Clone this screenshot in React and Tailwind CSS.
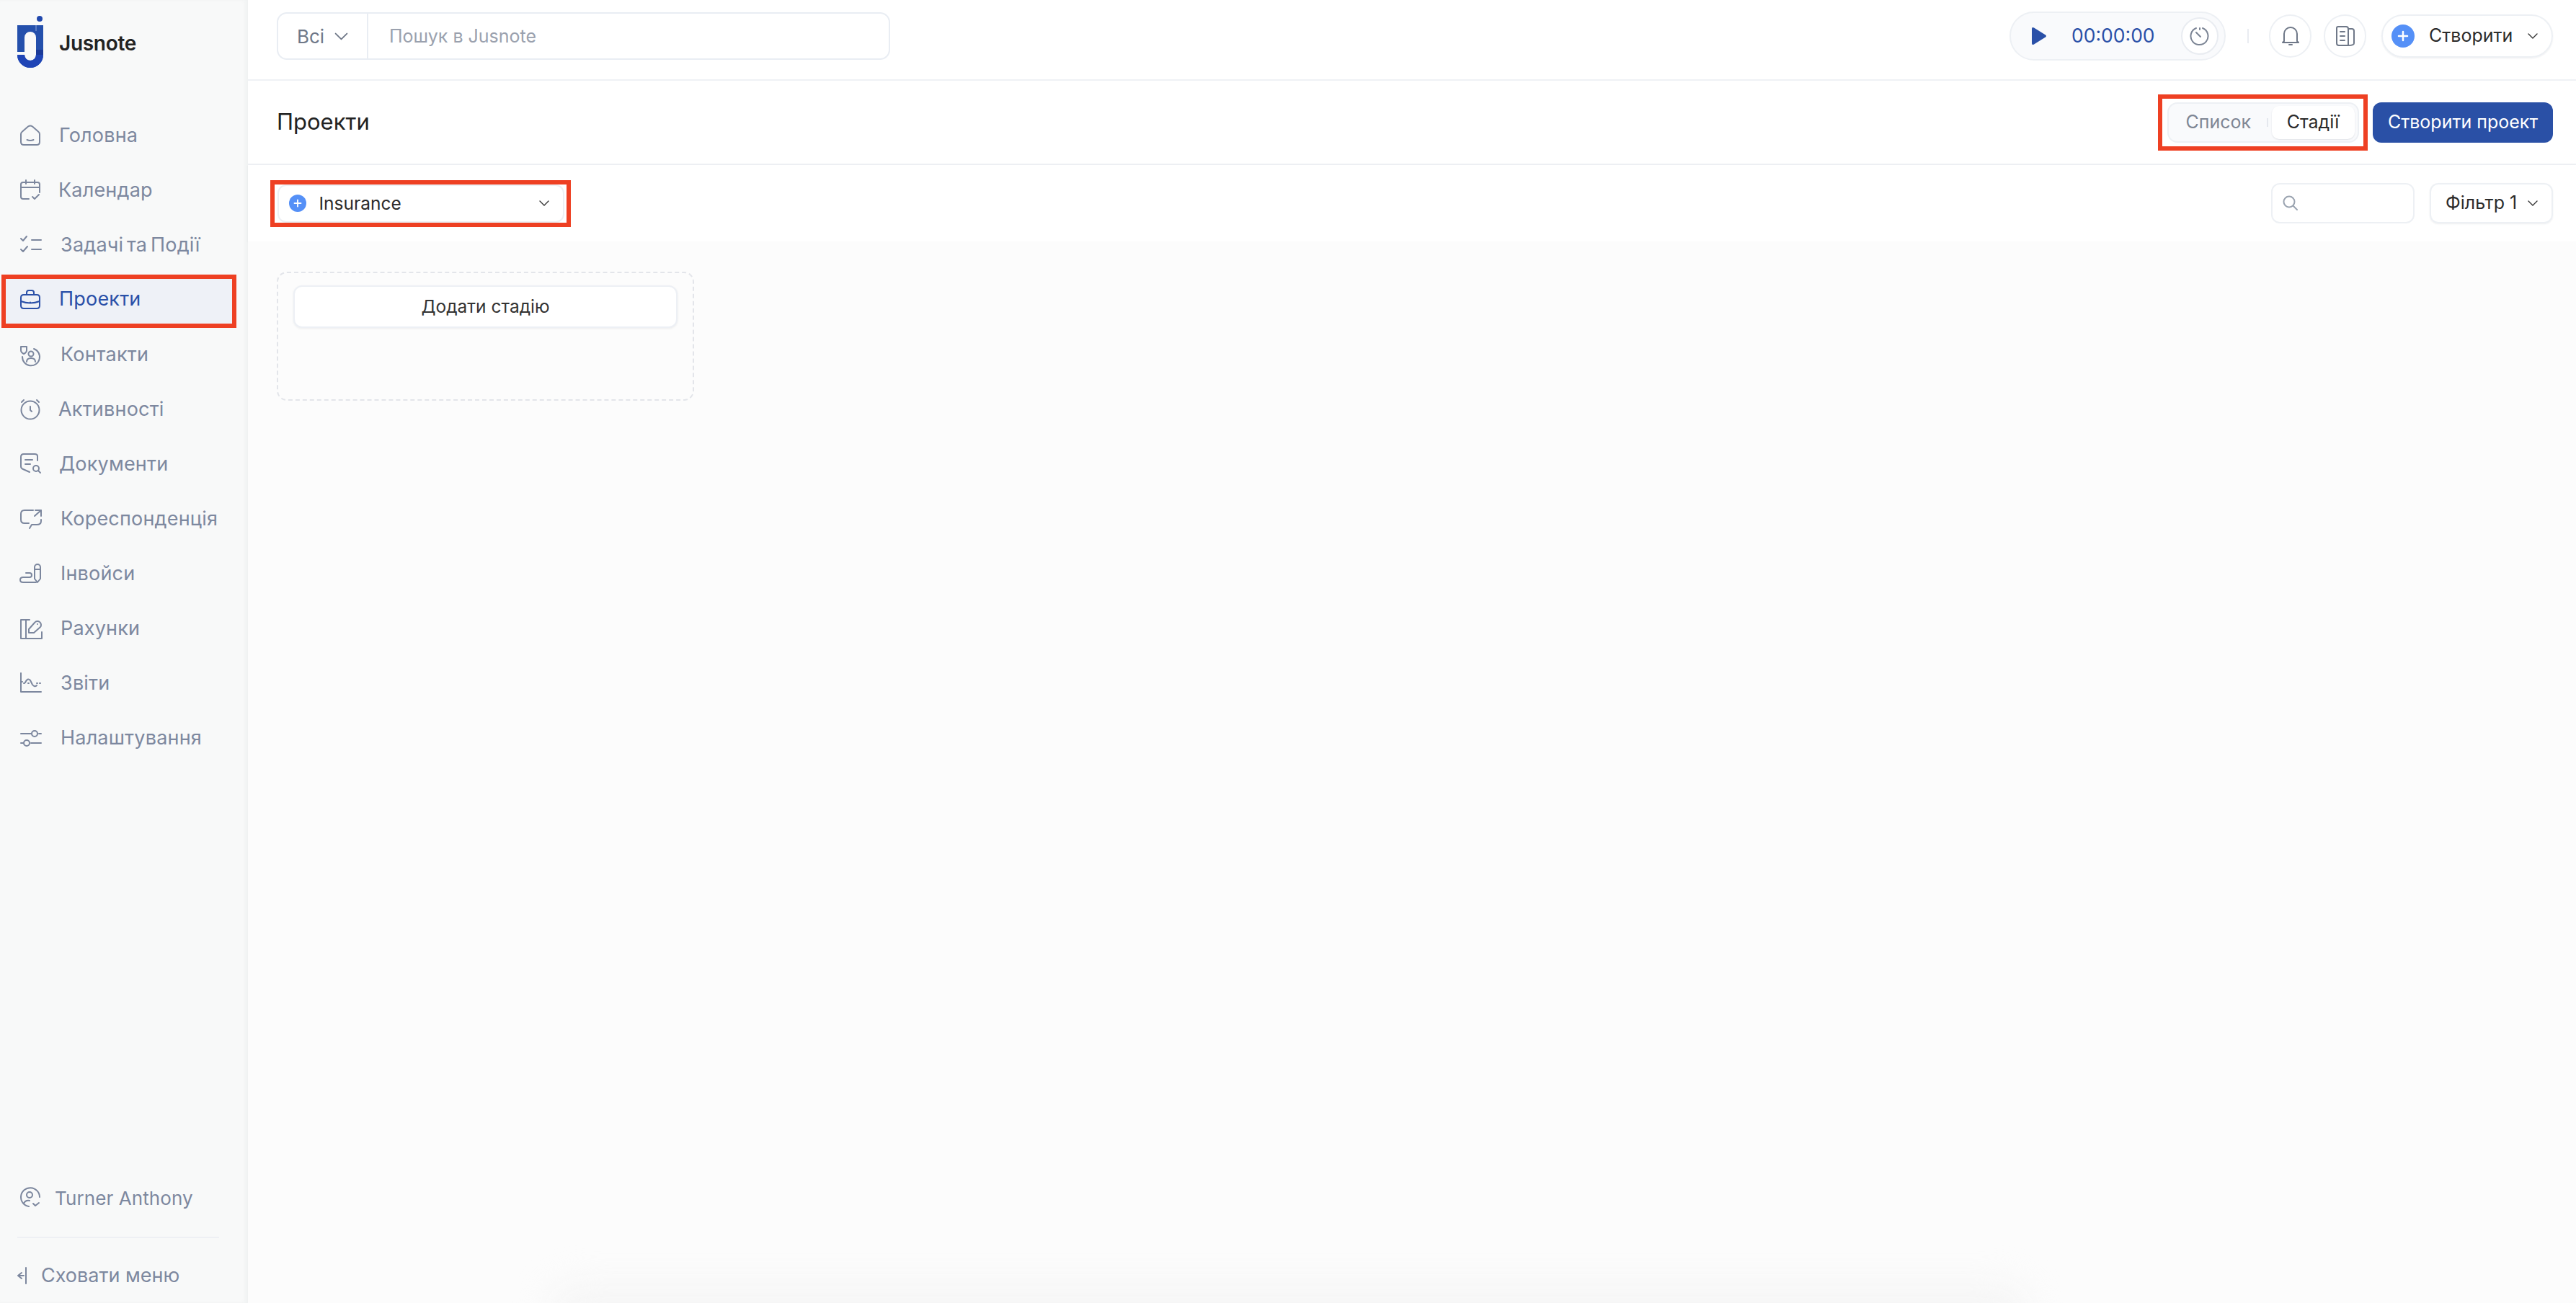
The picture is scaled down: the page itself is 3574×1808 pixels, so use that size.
import React from "react";

const I = ({ w = 30, h = 30, c = "#7c879e", sw = 2, children, className = "" }) => (
  <svg width={w} height={h} viewBox={`0 0 ${w} ${h}`} fill="none" stroke={c} strokeWidth={sw} strokeLinecap="round" strokeLinejoin="round" className={`shrink-0 overflow-visible ${className}`}>
    {children}
  </svg>
);

const Home = () => (<I><path d="M1 13q0-2 2-3.500l8-7q3-2 6 0l8 7q2 1.500 2 3.500v11q0 4-4 4H5q-4 0-4-4z" /><path d="M9.500 21q4.500 2 9 0" /></I>);
const Calendar = () => (<I><path d="M12 27H4q-3 0-3-3V7q0-3 3-3h20q3 0 3 3v11M1 11h26M8 1v5M20 1v5" /><path d="m17 24 3 3 6-6" /></I>);
const Tasks = () => (<I><path d="m1 6 3 3 5-6M1 21l3 3 6-7M16 8h13M16 21h13" /></I>);
const Case = ({ c = "#7c879e" }) => (<I c={c}><path d="M5 8h18q4 0 4 4v11q0 4-4 4H5q-4 0-4-4V12q0-4 4-4zM9 8V5q0-3 3-3h4q3 0 3 3v3M1 17q13 5 26 0" /><path d="M14 18.500v.5" /></I>);
const Contacts = () => (<I><path d="M1 4h8v5q0 3-4 5-4-2-4-5z" /><path d="M19 7a12 12 0 1 1-16 11" /><circle cx="15" cy="14" r="3.500" /><path d="M9 25q0-5 6-5t6 5" /></I>);
const Alarm = () => (<I><circle cx="14" cy="16" r="12.500" /><path d="M14 11v5l2 2M2 5l3-3M26 5l-3-3" /></I>);
const Doc = () => (<I><path d="M13 26 4 22q-3-1-3-4V5q0-4 4-4h15q4 0 4 3v6M7 9h10M7 15h7" /><circle cx="22" cy="21" r="4" /><path d="m25 24 3 3" /></I>);
const Chat = () => (<I><path d="M18 3H6q-5 0-5 5v8q0 5 5 5h6" /><path d="m21 3h8v8M29 3l-9 8M29 16v2q0 5-6 5h-7l-3 5" /></I>);
const Invoice = () => (<I><path d="M22 27H4q-4 0-4-3.500T4 20h9q3 0 3-3t-3-3H8" /><path d="M20 22V6a4 4 0 0 1 8 0v16l-4 5zM20 9h8" /></I>);
const Bills = () => (<I><path d="M1 3h12M1 3v26h29V20M8 3v26" /><path d="M12 21v-5l8-9a5 5 0 0 1 8 6l-9 8zM24 9v.01" /></I>);
const Reports = () => (<I><path d="M1 1v26h28" /><path d="M1 13h2M7 14q3-7 7-3l3 6q3 4 6 1" /><path d="M5 15h2M11 15h1M23 15h6" strokeDasharray="1 3" /></I>);
const Sliders = () => (<I><path d="M1 9h14M26 9h3M1 22h3M15 22h14" /><circle cx="20" cy="9" r="4" /><circle cx="9" cy="22" r="4" /></I>);
const User = () => (<I><circle cx="13" cy="11" r="4" /><path d="M12 27A13 13 0 1 1 27 14M5 23q2-5 8-4M18 23l3 3 5-4" /></I>);
const Chevron = ({ c = "#333", s = 16 }) => (
  <svg width={s} height={s} viewBox="0 0 16 16" fill="none" stroke={c} strokeWidth="1.400" strokeLinecap="round" strokeLinejoin="round" className="shrink-0"><path d="m2 5 6 6 6-6" /></svg>
);
const PlusDot = ({ s = 32 }) => (
  <svg width={s} height={s} viewBox="0 0 32 32" className="shrink-0"><circle cx="16" cy="16" r="16" fill="#5590f7" /><path d="M16 10v12M10 16h12" stroke="#fff" strokeWidth="2.500" strokeLinecap="round" /></svg>
);
const Logo = () => (
  <svg width="36" height="72" viewBox="0 0 36 72" className="shrink-0">
    <circle cx="31" cy="4" r="4" fill="#2148ad" />
    <path d="M0 13H36V54a18 18 0 0 1-36 0H10a8 8 0 0 0 16 0V30a8 8 0 0 0-16 0V50H0Z" fill="#2450ac" />
    <path d="M26 47H36V54H26Z" fill="#1b3a98" />
    <path d="M0 54H10a8 8 0 0 0 16 0H36a18 18 0 0 1-36 0Z" fill="#1f45b6" />
    <path d="M26 13V21" stroke="#8ea6d8" strokeWidth="1" />
  </svg>
);

const items = [
  { t: "Головна", i: Home, cls: "ml-[24px]" },
  { t: "Календар", i: Calendar, cls: "ml-[23px]" },
  { t: "Задачі та Події", i: Tasks, cls: "ml-[26px] [word-spacing:-3px]" },
  { t: "Проекти", i: () => <Case c="#2a50a8" />, cls: "ml-[24px] text-[#2a50a8]", active: true },
  { t: "Контакти", i: Contacts, cls: "ml-[26px]" },
  { t: "Активності", i: Alarm, cls: "ml-[23px]" },
  { t: "Документи", i: Doc, cls: "ml-[24px]" },
  { t: "Кореспонденція", i: Chat, cls: "ml-[26px]" },
  { t: "Інвойси", i: Invoice, cls: "ml-[26px]" },
  { t: "Рахунки", i: Bills, cls: "ml-[26px]" },
  { t: "Звіти", i: Reports, cls: "ml-[26px]" },
  { t: "Налаштування", i: Sliders, cls: "ml-[26px]" },
];

function Sidebar() {
  return (
    <aside className="w-[344px] shrink-0 h-full bg-[#f8f9f9] flex flex-col shadow-[inset_-4px_0_5px_rgba(40,50,70,0.035)]">
      <div className="h-[150px] pt-[22px] pl-6 flex items-start">
        <Logo />
        <span className="ml-[22px] mt-[21px] text-[28px] leading-[34px] font-semibold tracking-[-0.3px] text-[#222]">Jusnote</span>
      </div>
      <nav className="flex flex-col">
        {items.map(({ t, i: Ic, cls, active }) => (
          <div key={t} className={active ? "h-[76px] px-[2px] pt-[3px] flex items-start" : "h-[76px] flex items-center pl-[28px]"}>
            {active ? (
              <div className="w-[326px] h-[74px] shrink-0 border-[6px] border-[#ee4023] bg-[#eef1f7] flex items-center pl-[20px] pb-[5px]">
                <Ic />
                <span className={`text-[27px] tracking-[0.2px] ${cls}`}>{t}</span>
              </div>
            ) : (
              <>
                <Ic />
                <span className={`text-[27px] tracking-[0.2px] text-[#7d889f] ${cls}`}>{t}</span>
              </>
            )}
          </div>
        ))}
      </nav>
      <div className="mt-auto flex flex-col">
        <div className="h-[60px] flex items-center pl-[28px]">
          <User />
          <span className="ml-[18px] text-[26px] tracking-[0.1px] text-[#7d889f]">Turner Anthony</span>
        </div>
        <div className="ml-6 mr-10 mt-[24px] h-[2px] bg-[#eef0f4]" />
        <div className="h-[90px] flex items-center pl-6 pt-[14px]">
          <svg width="14" height="24" viewBox="0 0 14 24" fill="none" stroke="#7c879e" strokeWidth="2" strokeLinecap="round" strokeLinejoin="round" className="shrink-0"><path d="M12 1v22M9 12H2M6 8l-5 4 5 4" /></svg>
          <span className="ml-[19px] text-[27px] text-[#7d889f]">Сховати меню</span>
        </div>
      </div>
    </aside>
  );
}

function TopBar() {
  return (
    <header className="h-[112px] shrink-0 border-b-2 border-[#eff1f5] flex items-center pl-10 pr-8 pb-[10px] bg-white">
      <div className="w-[851px] h-[66px] rounded-[14px] border-2 border-[#e9edf3] flex items-stretch">
        <div className="w-[125px] shrink-0 border-r-2 border-[#e9edf3] flex items-center pl-[26px] gap-[13px]">
          <span className="text-[26px] text-[#6f7888]">Всі</span>
          <Chevron c="#6f7888" s={21} />
        </div>
        <div className="pl-[29px] pt-[2px] flex items-center text-[25px] text-[#9aa1ae]">Пошук в Jusnote</div>
      </div>
      <div className="ml-auto flex items-center">
        <div className="w-[300px] h-[68px] rounded-full border-2 border-[#edf0f4] bg-[#f9fafc] flex items-center pl-[28px] pr-2">
          <svg width="22" height="26" viewBox="0 0 22 26" className="shrink-0"><path d="M1 3q0-3 3-1.500l16 10q2 1.500 0 3l-16 10q-3 1.500-3-1.500z" fill="#2a50a8" /></svg>
          <span className="ml-[34px] text-[26.500px] text-[#2a50a8]">00:00:00</span>
          <div className="ml-auto w-[52px] h-[52px] rounded-full border-2 border-[#e9ecf1] bg-white flex items-center justify-center">
            <svg width="28" height="28" viewBox="0 0 28 28" fill="none" stroke="#7b8494" strokeWidth="2" strokeLinecap="round"><path d="M18 3a12 12 0 1 1-9 0M14 3v2M9 9l6 6" /></svg>
          </div>
        </div>
        <div className="ml-[30px] mr-[28px] w-[2px] h-5 bg-[#e9ecf1]" />
        <div className="w-[59px] h-[60px] rounded-full border-2 border-[#edf0f4] flex items-center justify-center">
          <svg width="24" height="28" viewBox="0 0 24 28" fill="none" stroke="#6f7888" strokeWidth="2" strokeLinecap="round" strokeLinejoin="round"><path d="M3 21V11a9 9 0 0 1 18 0v10l2 2H1zM10 26h4" /></svg>
        </div>
        <div className="ml-[17px] w-[59px] h-[60px] rounded-full border-2 border-[#edf0f4] flex items-center justify-center">
          <svg width="26" height="28" viewBox="0 0 26 28" fill="none" stroke="#6f7888" strokeWidth="2" strokeLinecap="round" strokeLinejoin="round"><path d="M17 27H4q-3 0-3-3V3q0-2 2-2h11q3 0 3 3v23q8 0 8-3V7q0-3-3-3h-5M6 8h6M6 14h6M6 20h6" /></svg>
        </div>
        <div className="ml-[21px] w-[238px] h-[60px] rounded-full border-2 border-[#edf0f4] shadow-[0_1px_2px_rgba(40,50,70,0.08)] flex items-center pl-[12px]">
          <PlusDot />
          <span className="ml-[20px] text-[25px] text-[#2b2b2b]">Створити</span>
          <span className="ml-[20px]"><Chevron /></span>
        </div>
      </div>
    </header>
  );
}

function TitleBar() {
  return (
    <div className="h-[117px] shrink-0 border-b-2 border-[#eff1f5] flex items-center pl-10 pr-8 bg-white">
      <h1 className="text-[31px] font-normal text-[#222]">Проекти</h1>
      <div className="ml-auto w-[291px] h-[78px] border-[6px] border-[#ee4023] flex items-center justify-center">
        <div className="w-[266px] h-[56px] rounded-[14px] border-2 border-[#edf0f4] bg-[#f9fafc] flex items-center pl-[24px] pr-1">
          <span className="text-[25px] text-[#7f8694]">Список</span>
          <span className="ml-[22px] w-[2px] h-3 bg-[#e5e8ee]" />
          <div className="ml-auto w-[115px] h-[46px] rounded-[10px] bg-white shadow-[0_1px_2px_rgba(40,50,70,0.12)] flex items-center justify-center text-[25px] text-[#2b2b2b]">Стадії</div>
        </div>
      </div>
      <button className="ml-[7px] w-[250px] h-[56px] rounded-[12px] bg-[#2a50a6] text-white text-[25px] flex items-center justify-center">Створити проект</button>
    </div>
  );
}

function FilterBar() {
  return (
    <div className="h-[106px] shrink-0 flex items-center pr-8 bg-white shadow-[0_1px_3px_rgba(40,50,70,0.05)] relative">
      <div className="ml-[31px] w-[417px] h-[65px] border-[6px] border-[#ee4023] flex items-center justify-center">
        <div className="w-[398px] h-[53px] rounded-[12px] border-2 border-[#edf0f4] flex items-center pl-[14px] pr-[18px]">
          <PlusDot s={24} />
          <span className="ml-[18px] text-[24.500px] text-[#2b2b2b]">Insurance</span>
          <span className="ml-auto"><Chevron /></span>
        </div>
      </div>
      <div className="ml-auto w-[199px] h-[56px] rounded-[12px] border-2 border-[#edf0f4] flex items-center pl-[14px]">
        <svg width="22" height="22" viewBox="0 0 22 22" fill="none" stroke="#9aa3b0" strokeWidth="2" strokeLinecap="round"><circle cx="9" cy="9" r="7.500" /><path d="m15 15 5 5" /></svg>
      </div>
      <div className="ml-[21px] w-[171px] h-[56px] rounded-[12px] border-2 border-[#edf0f4] shadow-[0_1px_2px_rgba(40,50,70,0.08)] flex items-center pl-[20px]">
        <span className="text-[25px] text-[#2b2b2b]">Фільтр 1</span>
        <span className="ml-[14px]"><Chevron /></span>
      </div>
    </div>
  );
}

export default function App() {
  return (
    <div className="w-[3574px] h-[1808px] flex overflow-hidden bg-white font-['Inter',sans-serif]">
      <Sidebar />
      <main className="flex-1 flex flex-col min-w-0">
        <TopBar />
        <TitleBar />
        <FilterBar />
        <section className="flex-1 bg-[#fcfcfc] pl-10 pt-[42px] relative overflow-hidden">
          <div className="w-[579px] h-[179px] rounded-[14px] border-2 border-dashed border-[#e3e5ea] px-[21px] pt-[17px]">
            <button className="w-full h-[59px] rounded-[12px] border-2 border-[#edf0f5] bg-white shadow-[0_1px_3px_rgba(40,50,70,0.08)] text-[24.500px] text-[#333]">Додати стадію</button>
          </div>
          <div className="absolute bottom-[-56px] left-[420px] w-[2050px] h-[80px] rounded-[40px] bg-[#f5f5f5] blur-[24px]" />
        </section>
      </main>
    </div>
  );
}
